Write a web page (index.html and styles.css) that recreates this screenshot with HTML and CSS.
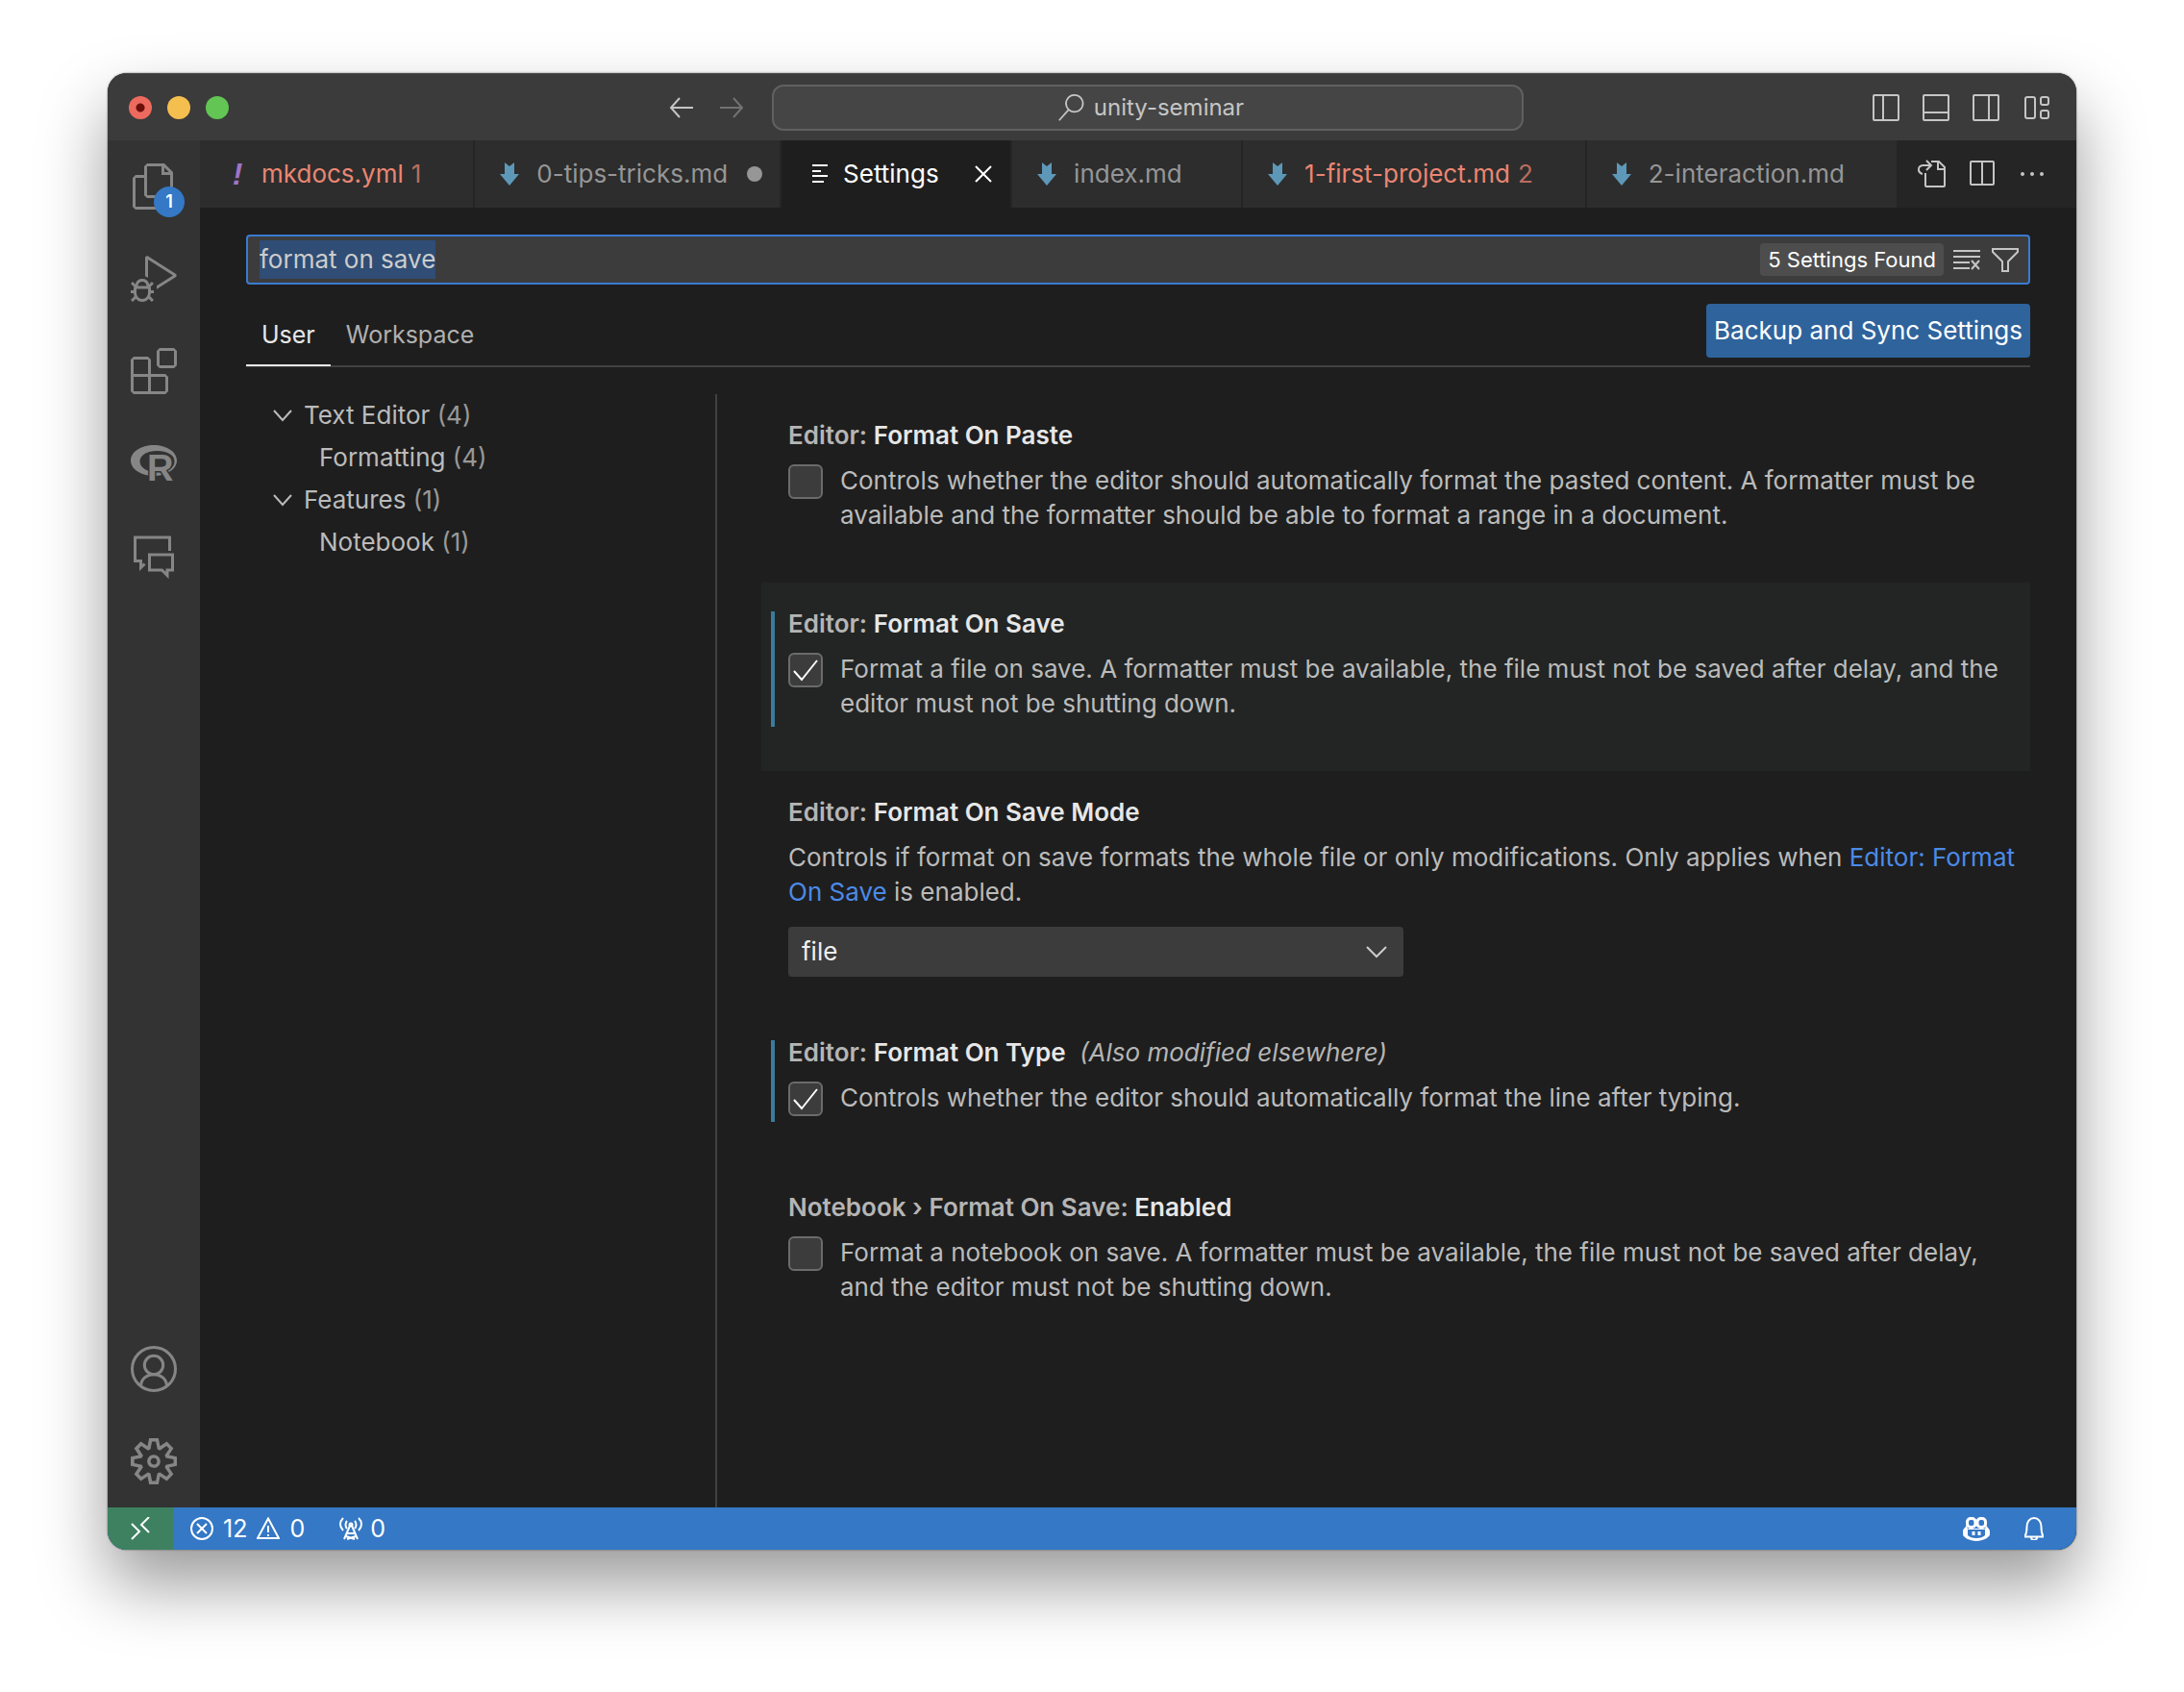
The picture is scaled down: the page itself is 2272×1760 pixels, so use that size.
FILE: index.html
```html
<!DOCTYPE html>
<html lang="en">
<head>
<meta charset="utf-8">
<title>Settings - unity-seminar</title>
<link rel="stylesheet" href="styles.css">
</head>
<body>
<div class="window">
  <header class="titlebar">
    <div class="lights">
      <button class="light light-close" aria-label="Close window"></button>
      <button class="light light-min" aria-label="Minimize window"></button>
      <button class="light light-max" aria-label="Zoom window"></button>
    </div>
    <div class="command-center">
      <nav class="history" aria-label="History">
        <button class="icon-btn" aria-label="Go back"><svg class="icon" viewBox="0 0 32 32"><path class="s2" d="M14 6L5 16l9 10M5 16h23"/></svg></button>
        <button class="icon-btn dim" aria-label="Go forward"><svg class="icon" viewBox="0 0 32 32"><path class="s2" d="M18 6l9 10-9 10M27 16H4"/></svg></button>
      </nav>
      <button class="command-box">
        <svg class="icon-28" viewBox="0 0 24 24"><path fill="currentColor" d="M15.25 0a8.25 8.25 0 0 0-6.18 13.72L1 22.88l1.12 1 8.05-9.12A8.251 8.251 0 1 0 15.25.01V0zm0 15a6.75 6.75 0 1 1 0-13.5 6.75 6.75 0 0 1 0 13.5z"/></svg>
        <span>unity-seminar</span>
      </button>
    </div>
    <div class="layout-actions">
      <button class="icon-btn" aria-label="Toggle primary side bar"><svg class="icon" viewBox="0 0 32 32"><rect class="s2" x="3" y="3" width="26" height="26" rx="1"/><path class="s2" d="M13 3v26"/></svg></button>
      <button class="icon-btn" aria-label="Toggle panel"><svg class="icon" viewBox="0 0 32 32"><rect class="s2" x="3" y="3" width="26" height="26" rx="1"/><path class="s2" d="M3 21h26"/></svg></button>
      <button class="icon-btn" aria-label="Toggle secondary side bar"><svg class="icon" viewBox="0 0 32 32"><rect class="s2" x="3" y="3" width="26" height="26" rx="1"/><path class="s2" d="M19 3v26"/></svg></button>
      <button class="icon-btn" aria-label="Customize layout"><svg class="icon" viewBox="0 0 32 32"><rect class="s2" x="5" y="5" width="10" height="22" rx="2"/><rect class="s2" x="21" y="5" width="8" height="8" rx="2"/><rect class="s2" x="21" y="19" width="8" height="8" rx="2"/></svg></button>
    </div>
  </header>

  <div class="workbench">
    <aside class="activity-bar" aria-label="Activity bar">
      <button class="activity" aria-label="Explorer"><svg class="icon-48" viewBox="0 0 24 24"><path fill="currentColor" d="M17.5 0h-9L7 1.5V6H2.5L1 7.500v15.070L2.500 24h12.070L16 22.570V18h4.700l1.300-1.430V4.500L17.500 0zm0 2.120l2.380 2.380H17.500V2.120zm-3 20.380h-12v-15H7v9.070L8.500 18h6v4.500zm6-6h-12v-15H16V6h4.500v10.500z"/></svg><span class="activity-badge">1</span></button>
      <button class="activity" aria-label="Run and debug"><svg class="icon-48" viewBox="0 0 24 24"><path fill="currentColor" d="M10.940 13.500l-1.320 1.320a3.730 3.730 0 0 0-7.240 0L1.060 13.500 0 14.560l1.720 1.720-.22.22V18H0v1.500h1.500v.08c.077.489.214.966.41 1.420L0 22.940 1.060 24l1.650-1.650A4.308 4.308 0 0 0 6 24a4.310 4.310 0 0 0 3.290-1.650L10.940 24 12 22.940 10.090 21c.198-.464.336-.951.41-1.450v-.1H12V18h-1.500v-1.500l-.22-.22L12 14.560l-1.060-1.060zM6 13.500a2.250 2.250 0 0 1 2.250 2.250h-4.500A2.250 2.250 0 0 1 6 13.500zm3 6a3.330 3.330 0 0 1-3 3 3.330 3.330 0 0 1-3-3v-2.250h6v2.250zm14.760-9.900v1.260L13.500 17.370V15.600l8.500-5.370L9 2v9.460a5.070 5.070 0 0 0-1.500-.72V.63L8.640 0l15.120 9.600z"/></svg></button>
      <button class="activity" aria-label="Extensions"><svg class="icon-48" viewBox="0 0 24 24"><path fill="currentColor" fill-rule="evenodd" d="M13.500 1.500L15 0h7.500L24 1.500V9l-1.500 1.500H15L13.500 9V1.500zm1.500 0V9h7.500V1.500H15zM0 15V6l1.500-1.500H9L10.500 6v7.500H18l1.500 1.500v7.500L18 24H1.500L0 22.500V15zm9-1.500V6H1.500v7.500H9zM9 15H1.500v7.500H9V15zm1.500 7.500H18V15h-7.500v7.500z"/></svg></button>
      <button class="activity" aria-label="R"><svg class="icon-48" viewBox="0 0 48 48"><path fill="currentColor" fill-rule="evenodd" d="M24 5C10.700 5 0 12.100 0 21s10.700 16 24 16 24-7.100 24-16S37.300 5 24 5zm3.500 6C38 11 45.500 15 45.500 22S38 33 27.500 33 9.500 28.500 9.500 22 17 11 27.500 11z"/><text class="r-mark" x="17" y="42">R</text></svg></button>
      <button class="activity" aria-label="Comments"><svg class="icon-48" viewBox="0 0 48 48"><path class="s3" d="M40.500 19V5H4.500v24.500h6v7l4-4"/><path class="s3" d="M19.500 23h24v16H38v5.500L32.500 39h-13z"/></svg></button>
      <div class="spacer"></div>
      <button class="activity" aria-label="Accounts"><svg class="icon-48" viewBox="0 0 48 48"><circle class="s3" cx="24" cy="24" r="22.500"/><circle class="s3" cx="24" cy="20" r="9.700"/><path class="s3" d="M10.500 41.500c.5-7 6-11.800 13.500-11.800S37 34.500 37.500 41.500"/></svg></button>
      <button class="activity" aria-label="Manage"><svg class="icon-48" viewBox="0 0 24 24"><path fill="currentColor" fill-rule="evenodd" d="M19.850 8.750l4.150.83v4.840l-4.150.83 2.350 3.520-3.430 3.430-3.520-2.350-.83 4.150H9.580l-.83-4.150-3.520 2.350-3.430-3.430 2.350-3.520L0 14.420V9.580l4.150-.83L1.800 5.230 5.230 1.800l3.520 2.350L9.580 0h4.840l.83 4.150 3.520-2.350 3.430 3.430-2.350 3.520zm-1.570 5.070l4-.81v-2l-4-.81-.54-1.300 2.290-3.430-1.430-1.430-3.430 2.290-1.300-.54-.81-4h-2l-.81 4-1.300.54-3.430-2.290-1.430 1.430L6.380 8.900l-.54 1.300-4 .81v2l4 .81.54 1.300-2.290 3.430 1.430 1.430 3.430-2.290 1.300.54.81 4h2l.81-4 1.300-.54 3.430 2.290 1.430-1.430-2.290-3.430.54-1.300zm-8.186-4.672A3.430 3.430 0 0 1 12 8.570 3.440 3.440 0 0 1 15.430 12a3.430 3.430 0 1 1-5.336-2.852zm.956 4.274c.281.188.612.288.95.288A1.700 1.700 0 0 0 13.710 12a1.710 1.710 0 1 0-2.660 1.422z"/></svg></button>
    </aside>

    <main class="editor">
      <div class="tabs">
        <button class="tab error"><span class="file-icon yml">!</span><span>mkdocs.yml</span><span class="count">1</span></button>
        <button class="tab"><svg class="file-icon md" viewBox="0 0 32 32"><path d="M11 4l5 4 5-4v12h5L16 28 6 16h5z"/></svg><span>0-tips-tricks.md</span><span class="dirty"></span></button>
        <div class="tab active"><svg class="file-icon" viewBox="0 0 32 32"><path class="s2" d="M12 7h16M12 13h9M12 18h16M12 24h12"/></svg><span>Settings</span><button class="tab-close" aria-label="Close Settings"><svg class="icon" viewBox="0 0 32 32"><path class="s2" d="M8 8l16 16M24 8L8 24"/></svg></button></div>
        <button class="tab"><svg class="file-icon md" viewBox="0 0 32 32"><path d="M11 4l5 4 5-4v12h5L16 28 6 16h5z"/></svg><span>index.md</span></button>
        <button class="tab error"><svg class="file-icon md" viewBox="0 0 32 32"><path d="M11 4l5 4 5-4v12h5L16 28 6 16h5z"/></svg><span>1-first-project.md</span><span class="count">2</span></button>
        <button class="tab"><svg class="file-icon md" viewBox="0 0 32 32"><path d="M11 4l5 4 5-4v12h5L16 28 6 16h5z"/></svg><span>2-interaction.md</span></button>
        <div class="editor-actions">
          <button class="icon-btn" aria-label="Open settings (JSON)"><svg class="icon" viewBox="0 0 32 32"><path class="s2" d="M9 15v13q0 1 1 1h18q1 0 1-1V9l-6-6h-8M22 3v8h7M6 16C0 14 1 7 7 7h7M10 2l5 5-5 5"/></svg></button>
          <button class="icon-btn" aria-label="Split editor"><svg class="icon" viewBox="0 0 32 32"><rect class="s2" x="4" y="3" width="24" height="24" rx="1"/><path class="s2" d="M16 3v24"/></svg></button>
          <button class="icon-btn" aria-label="More actions"><svg class="icon" viewBox="0 0 32 32"><g fill="currentColor"><circle cx="6" cy="16" r="2"/><circle cx="16" cy="16" r="2"/><circle cx="26" cy="16" r="2"/></g></svg></button>
        </div>
      </div>

      <div class="settings">
        <div class="search">
          <input id="query" class="search-input" type="text" value="format on save" aria-label="Search settings" spellcheck="false">
          <span class="found">5 Settings Found</span>
          <button class="icon-btn" aria-label="Clear search"><svg class="icon" viewBox="0 0 32 32"><path class="s2" d="M2 7h28M2 13h28M2 19h17M2 25h17M21 17l8 9M29 17l-8 9"/></svg></button>
          <button class="icon-btn" aria-label="Filter settings"><svg class="icon" viewBox="0 0 32 32"><path class="s2" d="M3 5h26v3l-10 10v10h-6V18L3 8z"/></svg></button>
        </div>
        <div class="scopes">
          <div class="scope-tabs">
            <button class="scope current">User</button>
            <button class="scope">Workspace</button>
          </div>
          <button class="sync">Backup and Sync Settings</button>
        </div>

        <div class="body">
          <nav class="toc" aria-label="Settings groups">
            <a class="toc-row" href="#text-editor"><svg class="icon" viewBox="0 0 32 32"><path class="s2" d="M7 11l9 10 9-10"/></svg><span>Text Editor <span class="toc-count">(4)</span></span></a>
            <a class="toc-row child" href="#formatting"><span>Formatting <span class="toc-count">(4)</span></span></a>
            <a class="toc-row" href="#features"><svg class="icon" viewBox="0 0 32 32"><path class="s2" d="M7 11l9 10 9-10"/></svg><span>Features <span class="toc-count">(1)</span></span></a>
            <a class="toc-row child" href="#notebook"><span>Notebook <span class="toc-count">(1)</span></span></a>
          </nav>

          <div class="list">
            <section class="setting">
              <h2 class="name"><span class="category">Editor: </span>Format On Paste</h2>
              <div class="choice"><input class="check" type="checkbox" id="paste"><label for="paste">Controls whether the editor should automatically format the pasted content. A formatter must be available and the formatter should be able to format a range in a document.</label></div>
            </section>
            <section class="setting modified focused">
              <h2 class="name"><span class="category">Editor: </span>Format On Save</h2>
              <div class="choice"><input class="check" type="checkbox" id="save" checked><label for="save">Format a file on save. A formatter must be available, the file must not be saved after delay, and the editor must not be shutting down.</label></div>
            </section>
            <section class="setting with-select">
              <h2 class="name"><span class="category">Editor: </span>Format On Save Mode</h2>
              <label class="description" for="mode">Controls if format on save formats the whole file or only modifications. Only applies when <a class="link" href="#save">Editor: Format On Save</a> is enabled.</label>
              <select class="select" id="mode"><option>file</option><option>modifications</option><option>modificationsIfAvailable</option></select>
            </section>
            <section class="setting modified">
              <h2 class="name"><span class="category">Editor: </span>Format On Type <em class="note">(Also modified elsewhere)</em></h2>
              <div class="choice"><input class="check" type="checkbox" id="type" checked><label for="type">Controls whether the editor should automatically format the line after typing.</label></div>
            </section>
            <section class="setting">
              <h2 class="name"><span class="category">Notebook › Format On Save: </span>Enabled</h2>
              <div class="choice"><input class="check" type="checkbox" id="notebook-save"><label for="notebook-save">Format a notebook on save. A formatter must be available, the file must not be saved after delay, and the editor must not be shutting down.</label></div>
            </section>
          </div>
        </div>
      </div>
    </main>
  </div>

  <footer class="status">
    <button class="remote" aria-label="Open a remote window"><svg class="icon-24" viewBox="0 0 24 24"><path class="s2" d="M3 7l8 8-8 8M21 0l-8 8 8 8"/></svg></button>
    <button class="status-item"><svg class="icon-24" viewBox="0 0 24 24"><circle class="s2" cx="12" cy="12" r="11"/><path class="s2" d="M7 7l10 10M17 7L7 17"/></svg><span>12</span><svg class="icon-24" viewBox="0 0 24 24"><path class="s2" d="M12 1.500L23 22H1zM12 9v7M12 18v2"/></svg><span>0</span></button>
    <button class="status-item"><svg class="icon-24" viewBox="0 0 24 24"><path class="s2" d="M5 23l6-14h2l6 14M8 17h8M7 20l9 3M17 20l-9 3"/><circle class="s2" cx="12" cy="8" r="1.500"/><path class="s2" d="M8 12c-2-2-2-6 0-8M16 12c2-2 2-6 0-8M4 14C0 10 0 5 4 1M20 14c4-4 4-9 0-13"/></svg><span>0</span></button>
    <div class="spacer"></div>
    <button class="status-icon" aria-label="Copilot"><svg class="icon-28" viewBox="0 0 28 28"><path fill="currentColor" fill-rule="evenodd" d="M4 10C3 13 0 14 0 17v3c0 3 7 7 14 7s14-4 14-7v-3c0-3-3-4-4-7l-1 5H5zM5 14v7c2 2 5 3 9 3s7-1 9-3v-7z"/><rect class="s3" x="4.500" y="3.500" width="8.500" height="9" rx="3.500"/><rect class="s3" x="15" y="3.500" width="8.500" height="9" rx="3.500"/><path class="s3" d="M11 17v4M17 17v4"/></svg></button>
    <button class="status-icon" aria-label="Notifications"><svg class="icon-24" viewBox="0 0 24 24"><path class="s2" d="M3 19c1-2 1.500-5 1.500-9C4.500 5 7.500 1 12 1s7.500 4 7.500 9c0 4 .5 7 1.500 9v1.500H3zM9 21c0 4 6 4 6 0"/></svg></button>
  </footer>
</div>
<script src="page.js"></script>
</body>
</html>
```
FILE: page.js
```js
const query = document.getElementById("query");
query.focus();
query.select();
```
FILE: styles.css
```css
* { box-sizing: border-box; }

body {
  margin: 0;
  min-height: 100vh;
  padding: 76px 112px 148px;
  display: flex;
  background: #fff;
  color: #bbb;
  font: 26px/36px Inter, "Liberation Sans", sans-serif;
}

button, input, select { font: inherit; color: inherit; }
button { padding: 0; border: 0; background: none; text-align: left; }
svg { display: block; flex: none; }
a { color: inherit; text-decoration: none; }

.window {
  flex: 1;
  min-width: 0;
  display: flex;
  flex-direction: column;
  overflow: hidden;
  border-radius: 20px;
  background: #1e1e1e;
  box-shadow: 0 0 2px rgba(0, 0, 0, .6), 0 36px 70px rgba(0, 0, 0, .4);
}

.icon { width: 32px; height: 32px; }
.icon-24 { width: 24px; height: 24px; }
.icon-28 { width: 28px; height: 28px; }
.icon-48 { width: 48px; height: 48px; }
.s2, .s3 { fill: none; stroke: currentColor; stroke-width: 2; }
.s3 { stroke-width: 3; }
.icon-btn { flex: none; color: #c5c5c5; }
.dim { color: #727272; }
.spacer { flex: 1; }

/* Title bar */
.titlebar {
  height: 70px;
  display: grid;
  grid-template-columns: 1fr auto 1fr;
  align-items: center;
  background: #3b3b3b;
  border-top: 1px solid #4a4a4a;
}
.lights { display: flex; gap: 16px; padding-left: 22px; }
.light { width: 24px; height: 24px; border-radius: 50%; }
.light-close { background: radial-gradient(circle, #6b0f0a 0 4px, #ed6a5e 5px); }
.light-min { background: #f5bf4f; }
.light-max { background: #62c554; }
.command-center { display: flex; align-items: center; }
.history { display: flex; gap: 20px; padding: 0 26px 0 6px; }
.command-box {
  width: 782px;
  height: 48px;
  display: flex;
  align-items: center;
  justify-content: center;
  gap: 10px;
  padding-left: 6px;
  border: 2px solid #606060;
  border-radius: 12px;
  background: #454545;
  color: #c5c5c5;
  font-size: 24px;
}
.layout-actions { display: flex; justify-content: flex-end; gap: 20px; padding-right: 26px; }

/* Activity bar */
.workbench { flex: 1; display: flex; min-height: 0; }
.activity-bar { width: 96px; flex: none; display: flex; flex-direction: column; background: #333; color: #868686; }
.activity { position: relative; height: 96px; display: grid; place-items: center; }
.activity-badge {
  position: absolute;
  left: 48px;
  top: 48px;
  width: 32px;
  height: 32px;
  border-radius: 50%;
  background: #3478c6;
  color: #fff;
  font-size: 18px;
  font-weight: 600;
  line-height: 32px;
  text-align: center;
}
.r-mark {
  fill: currentColor;
  stroke: #333;
  stroke-width: 3;
  paint-order: stroke;
  font: bold 38px "Liberation Sans", sans-serif;
}

/* Editor tabs */
.editor { flex: 1; min-width: 0; display: flex; flex-direction: column; }
.tabs { height: 70px; display: flex; background: #252526; }
.tab {
  min-width: 240px;
  display: flex;
  align-items: center;
  padding: 0 54px 0 20px;
  border-right: 2px solid #252526;
  background: #2d2d2d;
  color: #969696;
  white-space: nowrap;
}
.tab.active { background: #1e1e1e; color: #fff; padding-right: 18px; }
.tab.error { color: #ea8672; }
.tab:has(.dirty) { padding-right: 18px; }
.file-icon { width: 32px; height: 32px; margin-right: 12px; }
.yml { padding-left: 6px; color: #a074c4; font: italic bold 32px/32px "Liberation Sans", sans-serif; text-align: center; }
.md { fill: #5e98b8; }
.count { margin-left: 8px; color: #b96d5f; }
.dirty { width: 16px; height: 16px; margin-left: 20px; border-radius: 50%; background: #969696; }
.tab-close { margin-left: auto; margin-right: -6px; }
.editor-actions { flex: 1; display: flex; align-items: center; justify-content: flex-end; gap: 20px; padding-right: 30px; }

/* Settings editor */
.settings { flex: 1; display: flex; flex-direction: column; padding: 28px 48px 0; }
.search {
  height: 52px;
  display: flex;
  align-items: center;
  gap: 8px;
  padding: 0 8px 0 12px;
  border: 2px solid #3a7bd0;
  border-radius: 4px;
  background: #3c3c3c;
}
.search-input { flex: 1; min-width: 0; height: 40px; padding: 0; border: 0; outline: 0; background: none; color: #ccc; line-height: 40px; }
.search-input::selection { background: #2f4d75; color: #ccc; }
.found { padding: 0 8px; border-radius: 4px; background: #4d4d4d; color: #fff; font-size: 22px; line-height: 34px; }

.scopes { height: 86px; display: flex; justify-content: space-between; align-items: flex-start; padding-top: 20px; border-bottom: 2px solid #414141; }
.scope-tabs { display: flex; align-self: stretch; margin-bottom: -1px; font-size: 25px; }
.scope { padding: 0 16px; color: #b0b0b0; border-bottom: 2px solid transparent; }
.scope.current { color: #e7e7e7; border-color: #e7e7e7; }
.sync { height: 56px; padding: 0 8px; border-radius: 4px; background: #2f639b; color: #fff; }

.body { flex: 1; display: flex; padding-top: 28px; }
.toc { width: 490px; flex: none; border-right: 2px solid #414141; }
.toc-row { height: 44px; display: flex; align-items: center; gap: 6px; padding-left: 22px; }
.toc-row.child { padding-left: 76px; }
.toc-count { color: #989898; }

.list { flex: 1; min-width: 0; padding-left: 46px; }
.setting { position: relative; padding: 26px 16px 52px 28px; }
.setting.with-select { padding-bottom: 36px; }
.setting.focused { background: #222524; }
.setting.modified::before { content: ""; position: absolute; left: 10px; top: 30px; bottom: 46px; width: 4px; background: #3b7b9b; }
.name { margin: 0 0 12px; color: #e7e7e7; font-size: 26px; font-weight: 600; line-height: 34px; }
.category { color: #b5b5b5; }
.note { margin-left: 8px; color: #b5b5b5; font-weight: 400; }
.choice { display: flex; gap: 18px; }
.check {
  appearance: none;
  flex: none;
  width: 36px;
  height: 36px;
  margin: 1px 0 0;
  border: 2px solid #6b6b6b;
  border-radius: 6px;
  background: #3c3c3c;
}
.check:checked { background: #3c3c3c url("data:image/svg+xml,%3Csvg xmlns='http://www.w3.org/2000/svg' viewBox='0 0 32 32'%3E%3Cpath d='M4 17l8 9L28 6' fill='none' stroke='%23fff' stroke-width='2'/%3E%3C/svg%3E") center / 32px no-repeat; }
.description { display: block; }
.link { color: #4c8ae6; }
.select {
  appearance: none;
  display: block;
  width: 640px;
  max-width: 100%;
  height: 52px;
  margin-top: 18px;
  padding: 0 14px;
  border: 0;
  border-radius: 4px;
  background: #3c3c3c url("data:image/svg+xml,%3Csvg xmlns='http://www.w3.org/2000/svg' viewBox='0 0 32 32'%3E%3Cpath d='M6 11l10 10 10-10' fill='none' stroke='%23ccc' stroke-width='2'/%3E%3C/svg%3E") right 12px center / 32px no-repeat;
  color: #f0f0f0;
}

/* Status bar */
.status { height: 44px; display: flex; align-items: center; padding-right: 14px; background: #3478c6; color: #fff; }
.status button { height: 44px; display: flex; align-items: center; }
.remote { width: 68px; justify-content: center; background: #3d8160; }
.status-item { gap: 10px; margin-left: 18px; font-size: 25px; }
.status-item + .status-item { gap: 8px; margin-left: 36px; }
.status-icon { width: 60px; justify-content: center; }
```
